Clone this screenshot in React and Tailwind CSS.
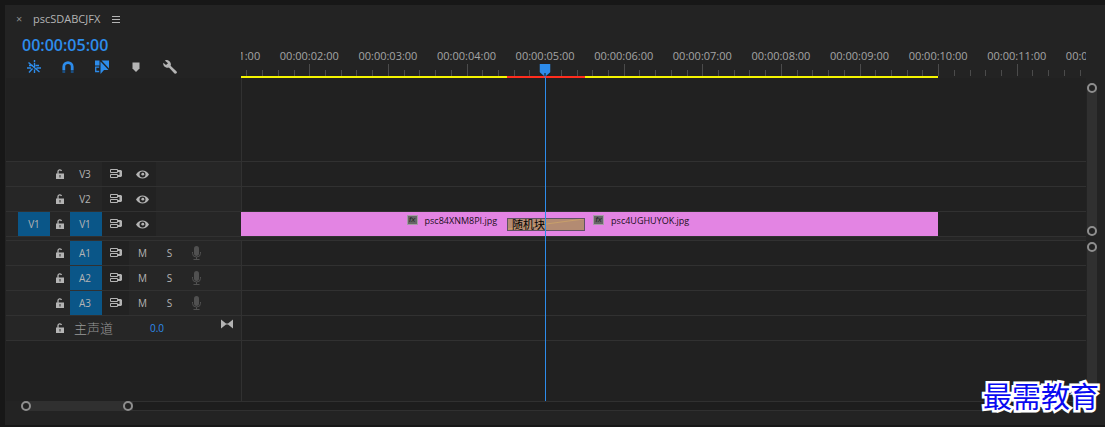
import React, { useState } from "react";
import clsx from "clsx";

// visible part of the sequence, in seconds
const VIEW_START = 1.131;
const VIEW_LENGTH = 10.75;

const pos = (seconds) => `${((seconds - VIEW_START) / VIEW_LENGTH) * 100}%`;
const span = (seconds) => `${(seconds / VIEW_LENGTH) * 100}%`;
const timecode = (s) => `00:00:${String(s).padStart(2, "0")}:00`;

const labels = Array.from({ length: 12 }, (_, i) => i + 1);
const ticks = Array.from({ length: 54 }, (_, i) => i + 6);

const videoTracks = [
  { name: "V3" },
  { name: "V2" },
  { name: "V1", source: "V1", targeted: true },
];
const audioTracks = ["A1", "A2", "A3"];

const clips = [
  { name: "psc84XNM8PI.jpg", start: VIEW_START, end: 5, align: "end" },
  { name: "psc4UGHUYOK.jpg", start: 5, end: 10, align: "start" },
];

const LockIcon = () => (
  <svg width="8" height="11" viewBox="0 0 8 11" fill="none">
    <path d="M0 4.500h8V10H0z" fill="#b4b4b4" />
    <path d="M2 5V2.500C2 .600 5 .300 5.500 2" stroke="#b4b4b4" strokeWidth="1.300" />
    <path d="M3.500 6h1v2.500h-1z" fill="#262626" />
  </svg>
);

const SyncIcon = () => (
  <svg width="12" height="10" viewBox="0 0 12 10" fill="none">
    <path d="M.5.500h7v3h-7zM.5 5.500h7v3h-7z" stroke="#b4b4b4" />
    <path d="M7 1h4l1 1v5l-1 1H8V6h1.500V3H7z" fill="#b4b4b4" />
  </svg>
);

const EyeIcon = () => (
  <svg width="13" height="9" viewBox="0 0 13 9">
    <path d="M0 4.500C3-.9 10-.9 13 4.500 10 9.900 3 9.900 0 4.500z" fill="#b4b4b4" />
    <circle cx="6.500" cy="4.500" r="3" fill="#222" />
    <circle cx="6.800" cy="4.200" r="1.400" fill="#b4b4b4" />
  </svg>
);

const MicIcon = () => (
  <svg width="9" height="14" viewBox="0 0 9 14" fill="none">
    <rect x="2" y="0" width="5" height="10" rx="2.500" fill="#505050" />
    <path d="M.5 6v1.500a4 3.500 0 0 0 8 0V6M4.500 11v2.500M1.500 13.500h6" stroke="#505050" />
  </svg>
);

const BowtieIcon = () => (
  <svg width="12" height="10" viewBox="0 0 12 10" fill="#b4b4b4">
    <path d="M0 .5 5 4.500v1L0 9.500zM12 .5 7 4.500v1l5 4zM5 4.500h2v1H5z" />
  </svg>
);

const NestIcon = () => (
  <svg width="14" height="14" viewBox="0 0 14 14" fill="none" stroke="#2d8ceb" strokeWidth="1.400">
    <path d="M7.500 0v2.200M7.500 3v4M2 5.500h4M8.500 5.500H12M0 8h4M9.500 8H14M7.500 9.500V13M1.500 2.500l11 9.500M5.500 8.500 2 12.500" />
  </svg>
);

const MagnetIcon = () => (
  <svg width="12" height="13" viewBox="0 0 12 13" fill="none">
    <path d="M1.800 9V5.800a4.200 4.200 0 0 1 8.400 0V9" stroke="#2d8ceb" strokeWidth="2.800" />
    <path d="M.4 9h2.800v3H.4zM8.800 9h2.800v3H8.800z" fill="#1b4e80" />
  </svg>
);

const LinkedIcon = () => (
  <svg width="14" height="14" viewBox="0 0 14 14" fill="#2d8ceb">
    <path d="M0 .5h4.500v5H0zM5.500 1.500V14L9 10h4.500z" />
    <path d="M6.500.500H14v8z" />
    <path d="M4.200 7.200H.7v4.300h3.500" fill="none" stroke="#2d8ceb" strokeWidth="1.300" />
  </svg>
);

const MarkerIcon = () => (
  <svg width="8" height="10" viewBox="0 0 8 10" fill="#b4b4b4">
    <path d="M.5.500h7v6L4 10 .5 6.500z" />
  </svg>
);

const WrenchIcon = () => (
  <svg width="14" height="14" viewBox="0 0 14 14" fill="#b4b4b4">
    <path d="M1.800.4a4.300 4.300 0 0 1 5.800 5.400l6 5.600a1.500 1.500 0 0 1-2.100 2.100L5.900 7.600A4.300 4.300 0 0 1 .3 2.700L3 5.100 5 3.300z" />
  </svg>
);

const tools = [
  { name: "Insert as nests", icon: <NestIcon /> },
  { name: "Snap", icon: <MagnetIcon /> },
  { name: "Linked selection", icon: <LinkedIcon /> },
  { name: "Add marker", icon: <MarkerIcon /> },
  { name: "Timeline settings", icon: <WrenchIcon /> },
];

const cell = "flex h-full shrink-0 items-center justify-center";

function TrackHeader({ name, source, targeted, audio }) {
  const [active, setActive] = useState(Boolean(targeted));

  return (
    <div className="flex h-[25px] border-t border-[#313131] bg-[#262626] pl-3">
      <button
        aria-label={`Source ${name}`}
        className={clsx(cell, "w-8", source && "bg-[#0a5688]")}
      >
        {source}
      </button>
      <button aria-label={`Lock ${name}`} className={clsx(cell, "w-5")}>
        <LockIcon />
      </button>
      <button
        onClick={() => setActive(!active)}
        className={clsx(cell, "w-8 pr-0.5", active && "bg-[#0a5688]")}
      >
        {name}
      </button>
      <button aria-label={`Sync lock ${name}`} className={clsx(cell, "w-[27px] bg-[#222]")}>
        <SyncIcon />
      </button>
      {audio ? (
        <>
          <button className={clsx(cell, "w-[27px]")}>M</button>
          <button className={clsx(cell, "w-[27px]")}>S</button>
          <button aria-label={`Record ${name}`} className={clsx(cell, "w-[27px]")}>
            <MicIcon />
          </button>
        </>
      ) : (
        <button aria-label={`Show ${name}`} className={clsx(cell, "w-[27px] bg-[#222]")}>
          <EyeIcon />
        </button>
      )}
    </div>
  );
}

function Ruler() {
  return (
    <div className="relative flex-1 overflow-hidden text-[11px] leading-4 text-[#a5a5a5]">
      {labels.map((s) => (
        <span
          key={s}
          className="absolute top-[43px] -translate-x-1/2"
          style={{ left: pos(s) }}
        >
          {timecode(s)}
        </span>
      ))}
      {ticks.map((t) => (
        <span
          key={t}
          className={clsx(
            "absolute bottom-0.5 w-px bg-[#4b4b4b]",
            t % 5 === 0 ? "h-3" : "h-1.5"
          )}
          style={{ left: pos(t / 5) }}
        />
      ))}
      {/* render bar */}
      <div className="absolute bottom-0 left-0 h-0.5 bg-[#f5f500]" style={{ width: pos(10) }} />
      <div
        className="absolute bottom-0 h-0.5 bg-[#ff2d1e]"
        style={{ left: pos(4.515), width: span(0.99) }}
      />
      <svg
        className="absolute bottom-0 -translate-x-1/2"
        style={{ left: pos(5) }}
        width="11"
        height="14"
        viewBox="0 0 11 14"
      >
        <path d="M0 0h11v8L6.500 12h-2L0 8z" fill="#2d8ceb" />
        <path d="M5 9h1v3H5z" fill="#111" />
        <path d="M5 12h1v2H5z" fill="#2d8ceb" />
      </svg>
    </div>
  );
}

function Clip({ name, start, end, align }) {
  return (
    <div
      className={clsx(
        "flex gap-[7px] overflow-hidden bg-[#e384e3] px-12 pt-[3px] text-[9px] leading-3 text-[#1a0f1a]",
        align === "end" && "justify-end"
      )}
      style={{ width: span(end - start) }}
    >
      <span className="flex h-2.5 w-[11px] shrink-0 items-center justify-center bg-[#666] font-['Liberation_Sans',sans-serif] text-[8px] leading-none text-[#222] italic ring-1 ring-[#a59aa5] ring-inset">
        fx
      </span>
      <span>{name}</span>
    </div>
  );
}

const Ring = () => (
  <span className="h-2.5 w-2.5 shrink-0 rounded-full border-2 border-[#8e8e8e] bg-[#222]" />
);

const VerticalZoom = ({ className }) => (
  <div className={clsx("flex w-2.5 flex-col justify-between rounded-full bg-[#303030]", className)}>
    <Ring />
    <Ring />
  </div>
);

export default function App() {
  return (
    <div className="relative flex min-h-screen flex-col bg-[#171717] pt-[5px] pb-0.5 pl-[5px] font-['Open_Sans','Noto_Sans_CJK_SC',sans-serif] text-[10px] text-[#b4b4b4]">
      <main className="flex flex-1 flex-col bg-[#232323] pl-px">
        <header className="flex h-[73px]">
          <div className="flex w-[235px] shrink-0 flex-col">
            <div className="flex h-[30px] items-center pl-2.5">
              <button aria-label="Close" className="w-[17px] text-left text-[11px] text-[#8c8c8c]">
                ×
              </button>
              <h1 className="text-[11px]">pscSDABCJFX</h1>
              <button aria-label="Panel menu" className="ml-3 flex flex-col gap-0.5">
                <span className="h-px w-2 bg-[#b4b4b4]" />
                <span className="h-px w-2 bg-[#b4b4b4]" />
                <span className="h-px w-2 bg-[#b4b4b4]" />
              </button>
            </div>
            <button className="self-start pl-4 text-base leading-[22px] font-semibold text-[#2d8ceb]">
              {timecode(5)}
            </button>
            <div className="flex pl-[11px]">
              {tools.map((tool) => (
                <button
                  key={tool.name}
                  aria-label={tool.name}
                  className="flex h-[22px] w-[34px] items-center justify-center"
                >
                  {tool.icon}
                </button>
              ))}
            </div>
          </div>
          <Ruler />
          <div className="w-[19px]" />
        </header>

        <div className="flex flex-1 bg-[#212121]">
          <div className="flex w-[235px] shrink-0 flex-col">
            <div className="h-[83px]" />
            {videoTracks.map((track) => (
              <TrackHeader key={track.name} {...track} />
            ))}
            <div className="h-1 border-t border-[#313131] bg-[#262626]" />
            {audioTracks.map((name) => (
              <TrackHeader key={name} name={name} targeted audio />
            ))}
            <div className="flex h-[26px] border-y border-[#313131] bg-[#262626] pl-11">
              <button aria-label="Lock master" className={clsx(cell, "w-5")}>
                <LockIcon />
              </button>
              <span className="flex w-20 items-center pl-1 text-[13px] leading-4 font-light text-[#999]">
                主声道
              </span>
              <button className="text-[#2d8ceb]">0.0</button>
              <button aria-label="Keyframes" className="mr-2 mb-2 ml-auto">
                <BowtieIcon />
              </button>
            </div>
          </div>

          <div className="relative flex flex-1 flex-col shadow-[inset_1px_0_0_#313131]">
            <div className="h-[83px]" />
            <div className="h-[25px] border-t border-[#313131]" />
            <div className="h-[25px] border-t border-[#313131]" />
            <div className="relative flex h-[25px] border-t border-[#313131]">
              {clips.map((clip) => (
                <Clip key={clip.name} {...clip} />
              ))}
              <div
                className="absolute top-1.5 h-[13px] overflow-hidden border border-[#5f5263] bg-[#b38b72] pl-1 text-[11px] leading-[12px] text-black"
                style={{ left: pos(4.515), width: span(0.99) }}
              >
                <svg
                  className="absolute inset-0 h-full w-full"
                  viewBox="0 0 78 12"
                  preserveAspectRatio="none"
                >
                  <path d="M0 11 78 0" stroke="#c9a069" />
                </svg>
                <span className="relative">随机块</span>
              </div>
            </div>
            <div className="h-1 border-t border-[#313131] bg-[#262626]" />
            <div className="h-[25px] border-t border-[#313131]" />
            <div className="h-[25px] border-t border-[#313131]" />
            <div className="h-[25px] border-t border-[#313131]" />
            <div className="h-[26px] border-y border-[#313131]" />
            {/* playhead */}
            <div className="absolute inset-y-0 w-px bg-[#2d8ceb]" style={{ left: pos(5) }} />
          </div>

          <div className="flex w-[19px] flex-col items-start bg-[#232323] pl-px">
            <VerticalZoom className="mt-[5px] h-[153px]" />
            <VerticalZoom className="mt-1.5 mb-0.5 flex-1" />
          </div>
        </div>

        <footer className="flex h-6 items-start">
          <div className="ml-[15px] flex h-2.5 w-28 items-center justify-between rounded-l-full bg-[#303030]">
            <Ring />
            <Ring />
          </div>
          <div className="mr-[19px] h-2.5 flex-1 border-y border-[#303030] bg-[#1d1d1d]" />
        </footer>
      </main>

      <p className="absolute right-1.5 bottom-3.5 font-['Noto_Sans_CJK_SC',sans-serif] text-[29px] leading-9 text-[#0a0af0] [-webkit-text-stroke:5px_white] [paint-order:stroke_fill]">
        最需教育
      </p>
    </div>
  );
}
